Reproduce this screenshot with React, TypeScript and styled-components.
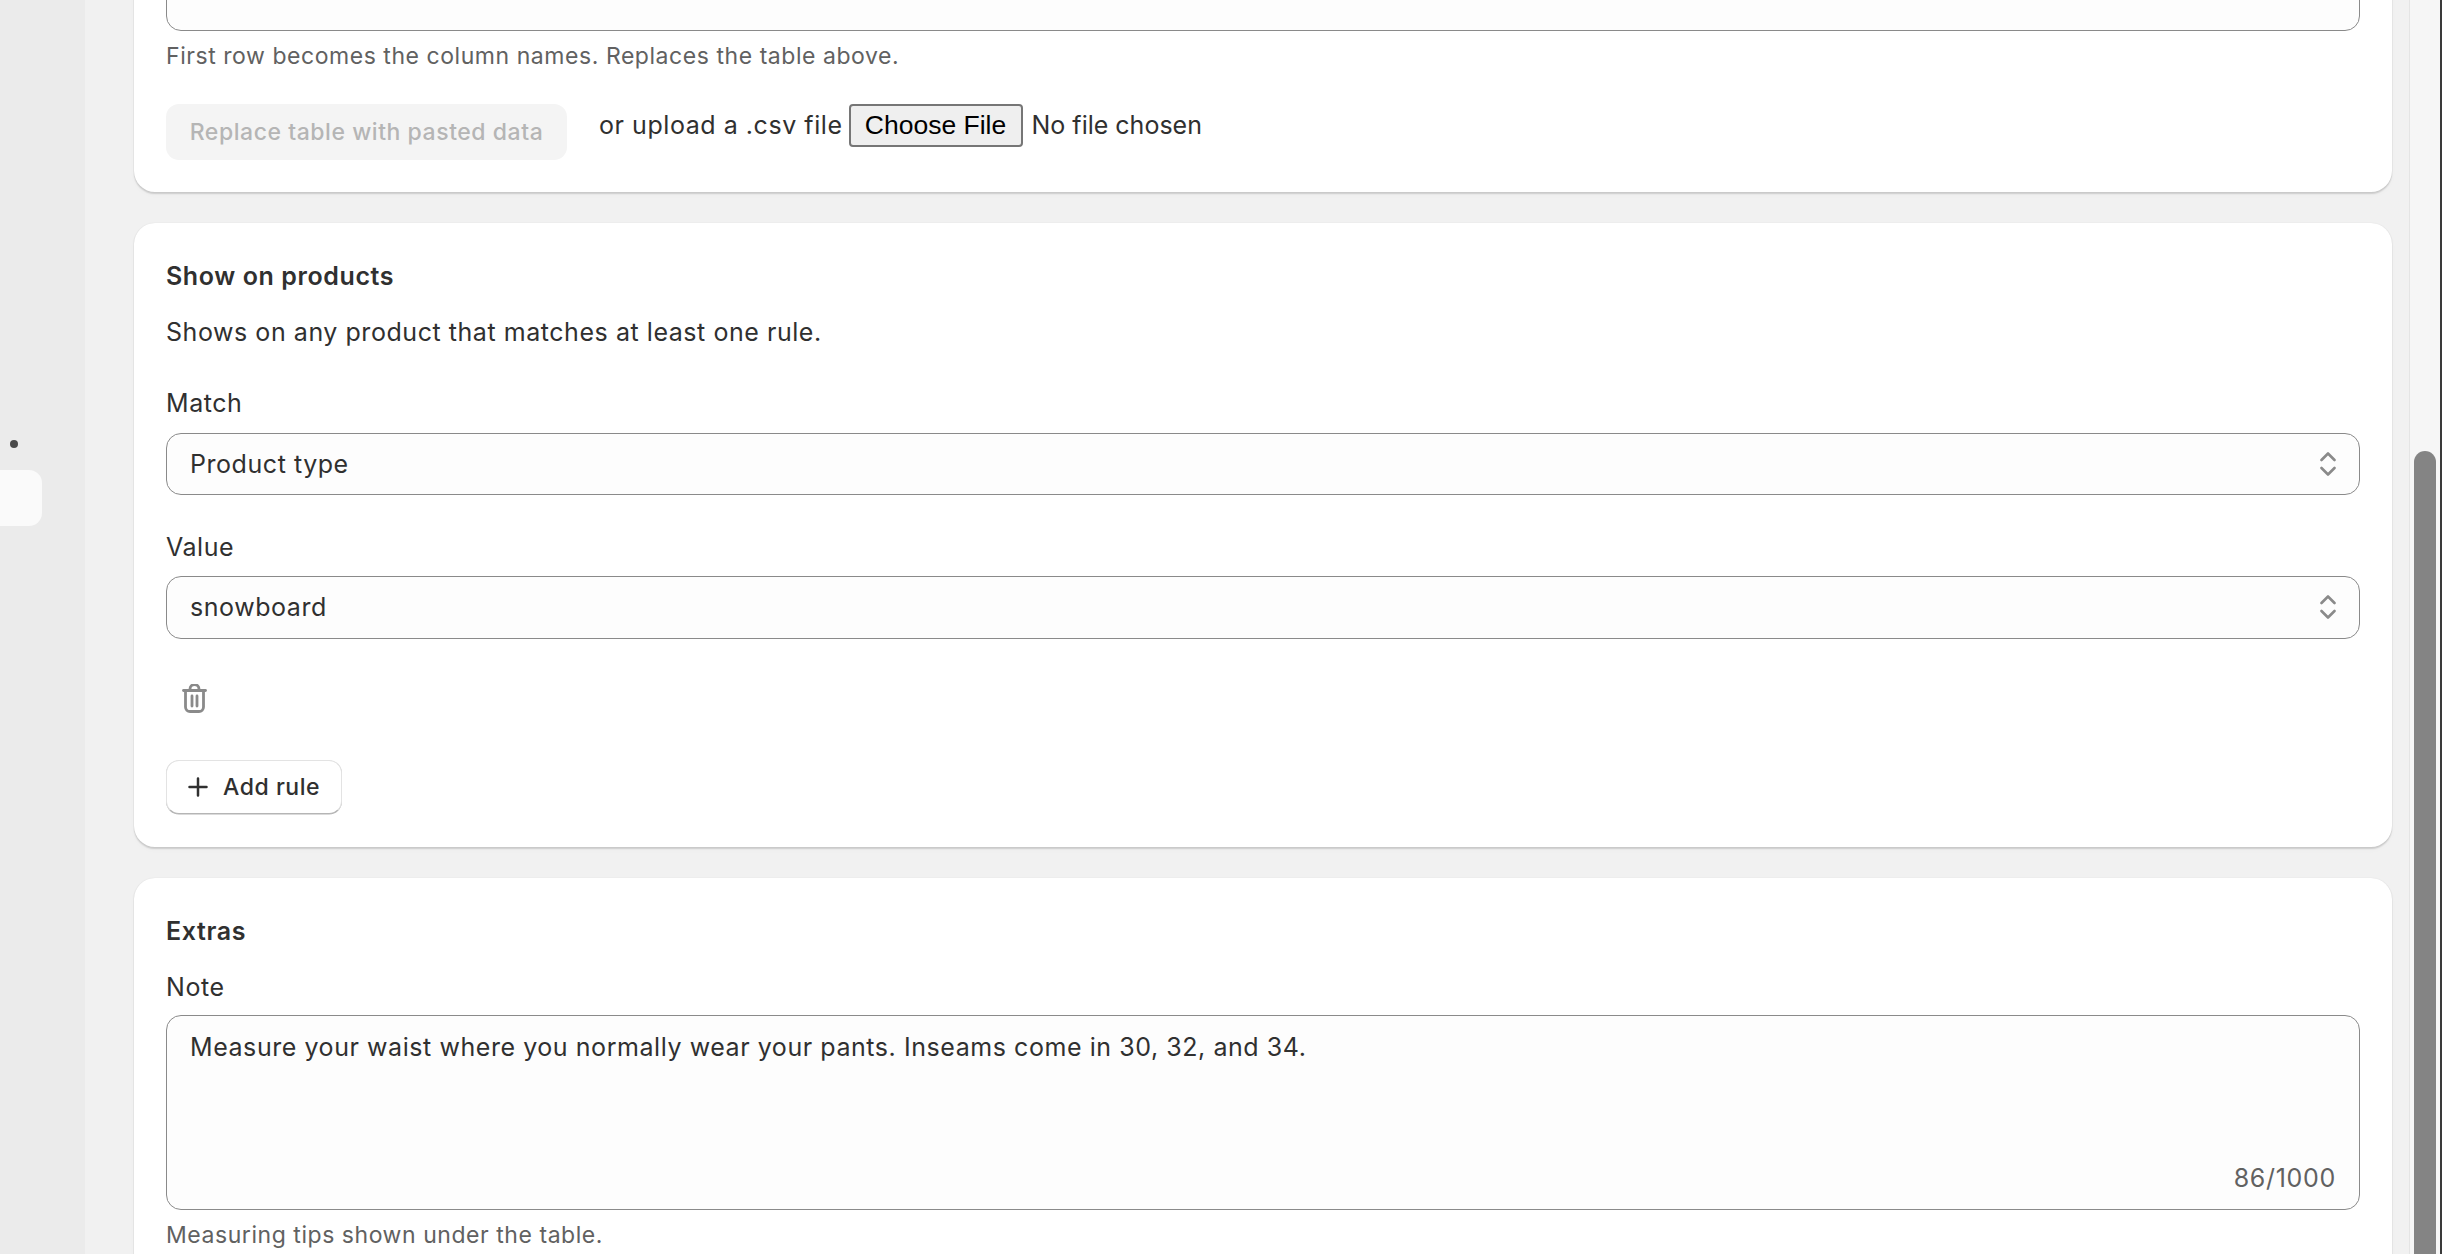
import React from "react";
import styled, { createGlobalStyle } from "styled-components";

const Global = createGlobalStyle`
  html, body { margin: 0; padding: 0; height: 100%; overflow: hidden; }
  body { font-family: Inter, "Noto Sans", sans-serif; color: #303030; background: #f1f1f1; -webkit-font-smoothing: antialiased; }
  * { box-sizing: border-box; }
`;

const Shell = styled.div`
  display: flex;
  width: 100%;
  height: 100vh;
  overflow: hidden;
`;

const Sidebar = styled.aside`
  flex: 0 0 85px;
  background: #ebebeb;
  padding-top: 440px;
`;

const Bullet = styled.div`
  width: 8px;
  height: 8px;
  margin-left: 10px;
  border-radius: 50%;
  background: #4a4a4a;
`;

const NavActive = styled.div`
  width: 42px;
  height: 56px;
  margin-top: 22px;
  border-radius: 0 13px 13px 0;
  background: #fafafa;
`;

const Main = styled.main`
  flex: 1;
  min-width: 0;
  background: #f1f1f1;
  padding: 0 17px 0 49px;
  overflow: hidden;
`;

const Stack = styled.div`
  display: flex;
  flex-direction: column;
  gap: 31px;
  margin-top: -120px;
`;

const Card = styled.section`
  background: #fff;
  border-radius: 21px;
  padding: 38px 32px 32px;
  box-shadow: 0 1.5px 1.5px rgba(0, 0, 0, 0.14), 0 0 1.5px rgba(0, 0, 0, 0.09), 0 3px 6px rgba(0, 0, 0, 0.02);
`;

const Title = styled.h2`
  margin: 0;
  font-size: 25px;
  line-height: 31px;
  font-weight: 620;
  letter-spacing: 0.6px;
  color: #303030;
`;

const Body = styled.p`
  margin: 25px 0 0;
  font-size: 25px;
  line-height: 31px;
  letter-spacing: 0.55px;
  color: #303030;
`;

const Label = styled.label<{ $top: number; $gap?: number }>`
  display: block;
  margin: ${(p) => p.$top}px 0 ${(p) => p.$gap ?? 13}px;
  font-size: 25px;
  line-height: 31px;
  letter-spacing: 0.55px;
  color: #303030;
`;

const Help = styled.p`
  margin: 11px 0 0;
  font-size: 23px;
  line-height: 28px;
  letter-spacing: 0.55px;
  color: #616161;
`;

const TextWrap = styled.div`
  position: relative;
`;

const TextArea = styled.textarea<{ $h: number }>`
  display: block;
  width: 100%;
  height: ${(p) => p.$h}px;
  padding: 16px 23px;
  resize: none;
  outline: none;
  font-family: inherit;
  font-size: 25px;
  line-height: 30px;
  letter-spacing: 0.56px;
  color: #303030;
  background: #fdfdfd;
  border: 1.5px solid #8a8a8a;
  border-radius: 15px;
`;

const Counter = styled.span`
  position: absolute;
  right: 24px;
  bottom: 17px;
  font-size: 25px;
  line-height: 30px;
  letter-spacing: 0.7px;
  color: #616161;
`;

const UploadRow = styled.div`
  display: flex;
  align-items: flex-start;
  margin-top: 34px;
`;

const PasteButton = styled.button`
  width: 401px;
  height: 56px;
  padding: 0;
  border: 0;
  border-radius: 13px;
  background: #f4f4f4;
  color: #b5b5b5;
  font-family: inherit;
  font-size: 23px;
  font-weight: 550;
  letter-spacing: 0.55px;
`;

const UploadLabel = styled.span`
  display: flex;
  align-items: center;
  height: 42px;
  margin-left: 32px;
  gap: 6px;
  font-size: 25px;
  letter-spacing: 0.55px;
  color: #303030;
`;

const FileInput = styled.input`
  font-family: inherit;
  font-size: 25px;
  letter-spacing: 0;
  color: #303030;
  &::file-selector-button {
    height: 43px;
    width: 174px;
    margin-right: 9px;
    padding: 0;
    font-family: "Liberation Sans", Arial, sans-serif;
    font-size: 26.5px;
    letter-spacing: 0;
    color: #000;
    background: #efefef;
    border: 2px solid #767676;
    border-radius: 4px;
  }
`;

const SelectWrap = styled.div`
  position: relative;
`;

const Select = styled.select<{ $h: number }>`
  display: block;
  width: 100%;
  height: ${(p) => p.$h}px;
  padding: 0 60px 0 23px;
  appearance: none;
  outline: none;
  font-family: inherit;
  font-size: 25px;
  letter-spacing: 0.55px;
  color: #303030;
  background: #fdfdfd;
  border: 1.5px solid #8a8a8a;
  border-radius: 15px;
`;

const Chevrons = styled.svg`
  position: absolute;
  right: 24px;
  top: 50%;
  width: 16px;
  height: 26px;
  transform: translateY(-50%);
  pointer-events: none;
`;

const IconButton = styled.button`
  display: flex;
  align-items: center;
  justify-content: center;
  width: 56px;
  height: 56px;
  margin-top: 32px;
  padding: 0;
  border: 0;
  background: transparent;
`;

const AddButton = styled.button`
  display: flex;
  align-items: center;
  gap: 15px;
  height: 54px;
  width: 176px;
  margin-top: 33px;
  padding: 0 0 0 21px;
  background: #fff;
  border: 1.5px solid #e3e3e3;
  border-bottom-color: #b5b5b5;
  border-radius: 13px;
  box-shadow: 0 0.5px 0 #b5b5b5;
  font-family: inherit;
  font-size: 23px;
  font-weight: 550;
  letter-spacing: 0.55px;
  color: #303030;
`;

const RulesCard = styled(Card)`
  padding-bottom: 33px;
`;

const ScrollTrack = styled.div`
  flex: 0 0 33px;
  padding: 451px 4px 0 4px;
  background: #f6f6f6;
  border-left: 1.5px solid #e4e4e4;
  border-right: 2px solid #3a3a3a;
`;

const ScrollThumb = styled.div`
  width: 22px;
  height: 100%;
  border-radius: 11px 11px 0 0;
  background: #848484;
`;

const ChevronIcon = () => (
  <Chevrons viewBox="0 0 16 26" fill="none" stroke="#8a8a8a" strokeWidth="2.6" strokeLinecap="round" strokeLinejoin="round">
    <path d="M1.5 9 8 2.5 14.5 9" />
    <path d="M1.5 17 8 23.5 14.5 17" />
  </Chevrons>
);

const TrashIcon = () => (
  <svg width="25" height="29" viewBox="0 0 25 29" fill="none" stroke="#8a8a8a" strokeWidth="2.8" strokeLinecap="round" strokeLinejoin="round">
    <path d="M8 6V5a4.5 4.5 0 0 1 9 0v1" />
    <path d="M1.5 6.5h22" />
    <path d="M3.5 6.5V23a4.5 4.5 0 0 0 4.5 4.5h9a4.5 4.5 0 0 0 4.5-4.5V6.5" />
    <path d="M10 12v10M15 12v10" />
  </svg>
);

const PlusIcon = () => (
  <svg width="20" height="20" viewBox="0 0 20 20" fill="none" stroke="#303030" strokeWidth="2.5" strokeLinecap="round">
    <path d="M10 1.5v17M1.5 10h17" />
  </svg>
);

const note = "Measure your waist where you normally wear your pants. Inseams come in 30, 32, and 34.";

export default function App() {
  return (
    <Shell>
      <Global />
      <Sidebar>
        <Bullet />
        <NavActive />
      </Sidebar>
      <Main>
        <Stack>
          <Card>
            <TextArea $h={113} readOnly value="" />
            <Help>First row becomes the column names. Replaces the table above.</Help>
            <UploadRow>
              <PasteButton disabled>Replace table with pasted data</PasteButton>
              <UploadLabel>
                or upload a .csv file
                <FileInput type="file" accept=".csv" />
              </UploadLabel>
            </UploadRow>
          </Card>
          <RulesCard>
            <Title>Show on products</Title>
            <Body>Shows on any product that matches at least one rule.</Body>
            <Label $top={40} $gap={13.5}>Match</Label>
            <SelectWrap>
              <Select $h={62} defaultValue="Product type">
                <option>Product type</option>
              </Select>
              <ChevronIcon />
            </SelectWrap>
            <Label $top={37}>Value</Label>
            <SelectWrap>
              <Select $h={63} defaultValue="snowboard">
                <option>snowboard</option>
              </Select>
              <ChevronIcon />
            </SelectWrap>
            <IconButton aria-label="Delete rule">
              <TrashIcon />
            </IconButton>
            <AddButton>
              <PlusIcon />
              Add rule
            </AddButton>
          </RulesCard>
          <Card>
            <Title>Extras</Title>
            <Label $top={25} $gap={12}>Note</Label>
            <TextWrap>
              <TextArea $h={195} readOnly value={note} />
              <Counter>86/1000</Counter>
            </TextWrap>
            <Help>Measuring tips shown under the table.</Help>
          </Card>
        </Stack>
      </Main>
      <ScrollTrack>
        <ScrollThumb />
      </ScrollTrack>
    </Shell>
  );
}
